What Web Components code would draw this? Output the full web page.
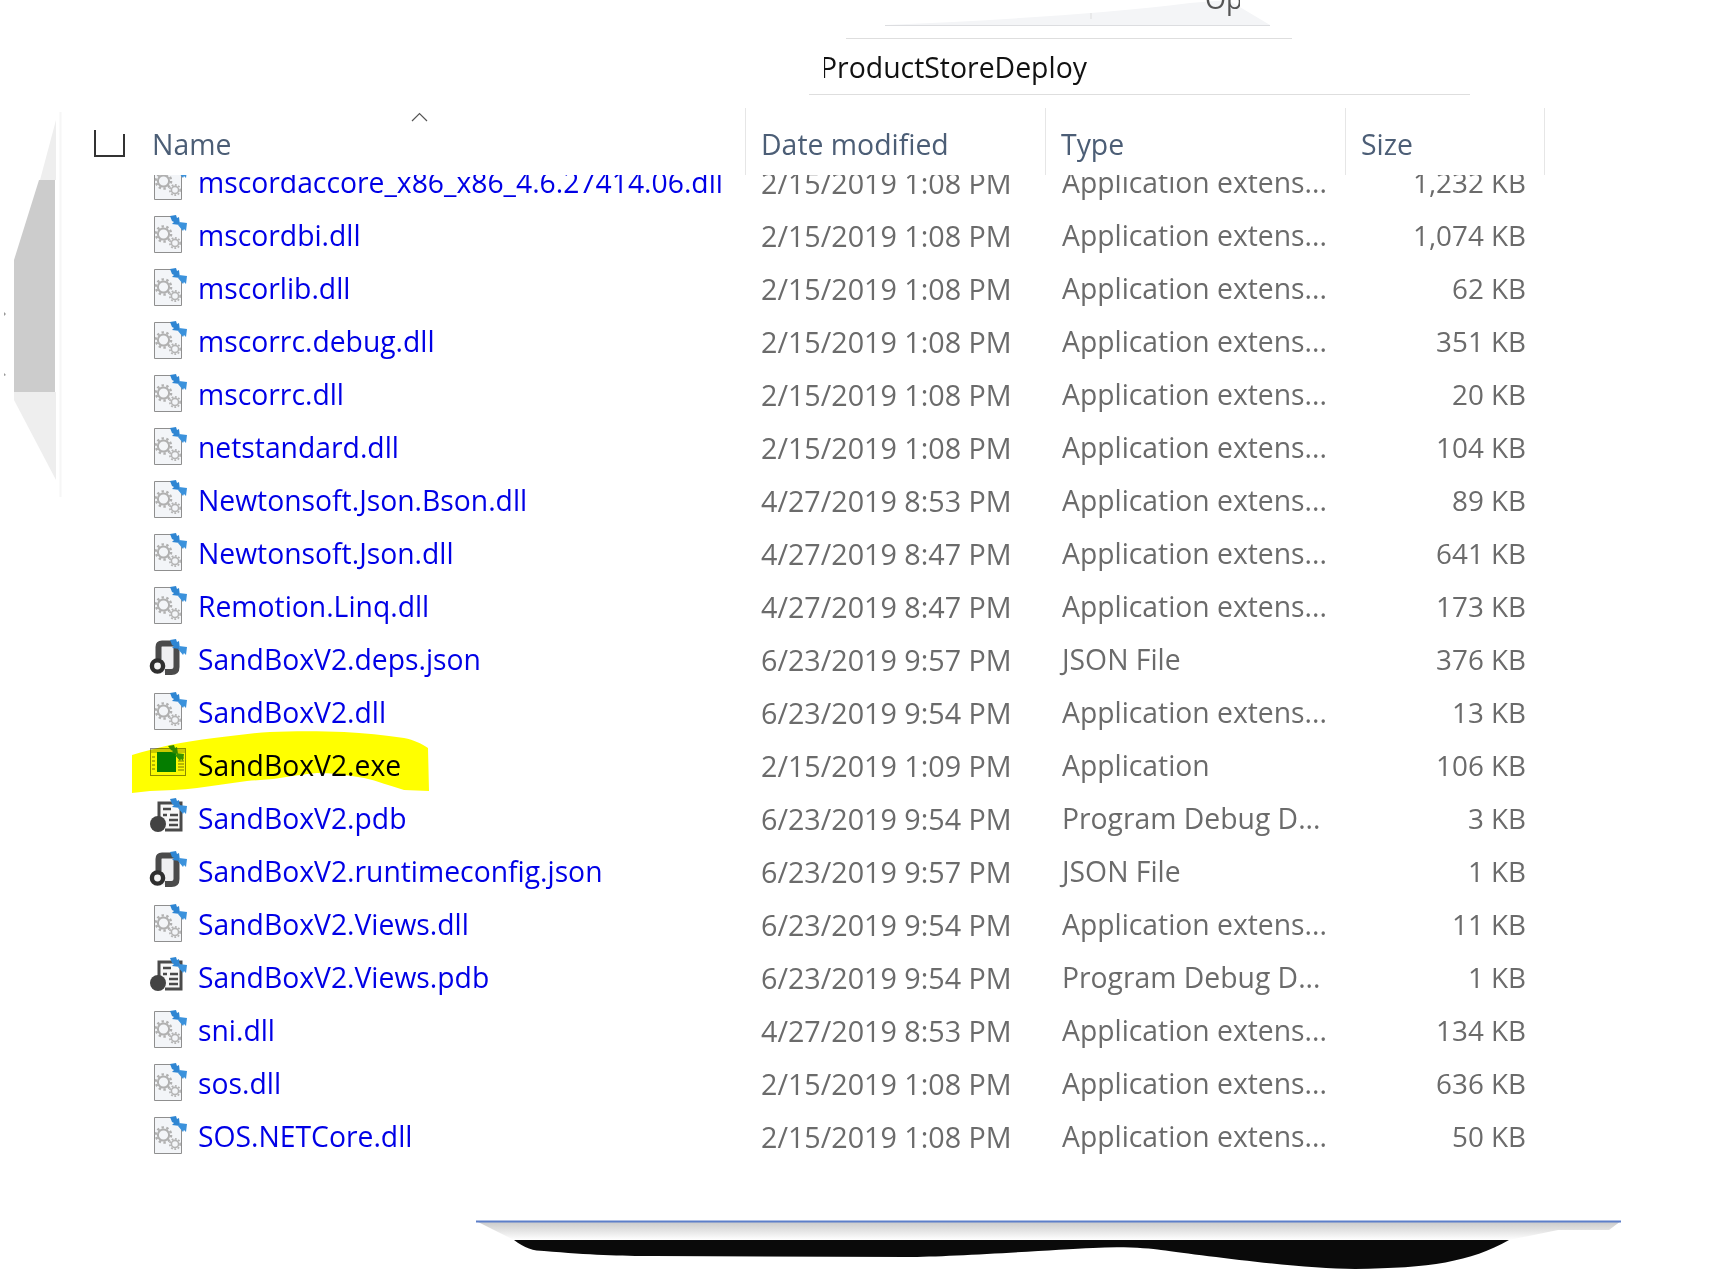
<!DOCTYPE html>
<html>
<head>
<meta charset="utf-8">
<style>
  html, body { margin: 0; background: #fff; }
  body { font-family: "Open Sans", "Noto Sans", sans-serif; width: 1725px; height: 1270px; overflow: hidden; position: relative; }
</style>
</head>
<body>
<torn-edges></torn-edges>
<path-bar>ProductStoreDeploy</path-bar>
<list-header></list-header>
<file-list>
  <file-row icon="dll" date="2/15/2019 1:08 PM" type="Application extens..." size="1,232 KB">mscordaccore_x86_x86_4.6.27414.06.dll</file-row>
  <file-row icon="dll" date="2/15/2019 1:08 PM" type="Application extens..." size="1,074 KB">mscordbi.dll</file-row>
  <file-row icon="dll" date="2/15/2019 1:08 PM" type="Application extens..." size="62 KB">mscorlib.dll</file-row>
  <file-row icon="dll" date="2/15/2019 1:08 PM" type="Application extens..." size="351 KB">mscorrc.debug.dll</file-row>
  <file-row icon="dll" date="2/15/2019 1:08 PM" type="Application extens..." size="20 KB">mscorrc.dll</file-row>
  <file-row icon="dll" date="2/15/2019 1:08 PM" type="Application extens..." size="104 KB">netstandard.dll</file-row>
  <file-row icon="dll" date="4/27/2019 8:53 PM" type="Application extens..." size="89 KB">Newtonsoft.Json.Bson.dll</file-row>
  <file-row icon="dll" date="4/27/2019 8:47 PM" type="Application extens..." size="641 KB">Newtonsoft.Json.dll</file-row>
  <file-row icon="dll" date="4/27/2019 8:47 PM" type="Application extens..." size="173 KB">Remotion.Linq.dll</file-row>
  <file-row icon="json" date="6/23/2019 9:57 PM" type="JSON File" size="376 KB">SandBoxV2.deps.json</file-row>
  <file-row icon="dll" date="6/23/2019 9:54 PM" type="Application extens..." size="13 KB">SandBoxV2.dll</file-row>
  <file-row icon="exe" marked date="2/15/2019 1:09 PM" type="Application" size="106 KB">SandBoxV2.exe</file-row>
  <file-row icon="pdb" date="6/23/2019 9:54 PM" type="Program Debug D..." size="3 KB">SandBoxV2.pdb</file-row>
  <file-row icon="json" date="6/23/2019 9:57 PM" type="JSON File" size="1 KB">SandBoxV2.runtimeconfig.json</file-row>
  <file-row icon="dll" date="6/23/2019 9:54 PM" type="Application extens..." size="11 KB">SandBoxV2.Views.dll</file-row>
  <file-row icon="pdb" date="6/23/2019 9:54 PM" type="Program Debug D..." size="1 KB">SandBoxV2.Views.pdb</file-row>
  <file-row icon="dll" date="4/27/2019 8:53 PM" type="Application extens..." size="134 KB">sni.dll</file-row>
  <file-row icon="dll" date="2/15/2019 1:08 PM" type="Application extens..." size="636 KB">sos.dll</file-row>
  <file-row icon="dll" date="2/15/2019 1:08 PM" type="Application extens..." size="50 KB">SOS.NETCore.dll</file-row>
</file-list>

<script>
const COLUMNS = "746px 300px 300px 199px";

// shared blue arrows in the corner of every file icon
const ARROWS = `
  <path d="M22 1l6-1 1 3 2-1 1 8-8-1 2-2-2-1z" fill="#2f86d3"/>
  <path d="M30 8l8 1-1 8-2-2-1 2-5-6 2-1z" fill="#3b92dc" transform="translate(1 -1)"/>`;

const ICONS = {
  dll: `
    <path d="M6.500 1.500H24L33.500 11V37.500H6.500z" fill="#f3f5f8" stroke="#8f8f8f"/>
    <circle cx="15.500" cy="19" r="5.600" fill="none" stroke="#b0b0b0" stroke-width="2"/>
    <circle cx="15.500" cy="19" r="7.600" fill="none" stroke="#b0b0b0" stroke-width="2.400" stroke-dasharray="2.400 2.400"/>
    <circle cx="27" cy="28" r="3.600" fill="none" stroke="#b4b4b4" stroke-width="1.600"/>
    <circle cx="27" cy="28" r="5.200" fill="none" stroke="#b4b4b4" stroke-width="1.800" stroke-dasharray="1.800 1.600"/>
    ${ARROWS}`,
  json: `
    <path d="M11 22V8q0-3.500 3-3.500H28V28q0 6-6 6h-8" fill="#efeff1" stroke="none"/>
    <path d="M10.500 20V8q0-3.500 3.500-3.500H27M28.500 9V28q0 5-5 5H17" fill="none" stroke="#4b4b4b" stroke-width="6"/>
    <circle cx="9.500" cy="27" r="5.600" fill="#f4f4f4" stroke="#2f2f2f" stroke-width="4.400"/>
    ${ARROWS}`,
  exe: `
    <rect x="2.500" y="3.500" width="35" height="27" fill="#fafafa" stroke="#8b8b8b"/>
    <rect x="3" y="4" width="34" height="4" fill="#c9c9c9"/>
    <rect x="9" y="7" width="19" height="20" fill="#057d05"/>
    <path d="M4 12h3M4 16h3M4 20h3M4 24h3M30 13h6M30 16h6M30 19h6M30 22h6M30 25h6" stroke="#777" stroke-width="1"/>
    <path d="M20 1l6-1 1 3 2-1 1 7-7-1 2-2-2-1z" fill="#2f86d3"/>
    <path d="M28 8l8 1-1 7-2-2-1 2-5-6 2-1z" fill="#3b92dc"/>`,
  pdb: `
    <path d="M11 22V5H33V32H17" fill="#f8f8f8" stroke="#4a4a4a" stroke-width="3"/>
    <path d="M15 11h8M15 17h4M22 17h8M21 22h9M21 27h9" stroke="#4a4a4a" stroke-width="2.600"/>
    <circle cx="10" cy="26" r="8" fill="#434343"/>
    ${ARROWS}`
};

class TornEdges extends HTMLElement {
  constructor() {
    super();
    this.attachShadow({ mode: "open" });
    this.shadowRoot.innerHTML = `
      <style>
        :host { position: absolute; left: 0; top: 0; width: 1725px; height: 1270px; pointer-events: none; }
        svg { display: block; }
        text { font: 27px "Open Sans", sans-serif; fill: #555; }
      </style>
      <svg width="1725" height="1270">
        <defs>
          <linearGradient id="shade" x1="0" y1="0" x2="0" y2="1">
            <stop offset="0" stop-color="#c8c8c8"/>
            <stop offset="1" stop-color="#fff"/>
          </linearGradient>
          <clipPath id="topclip"><rect x="1200" y="0" width="40" height="16"/></clipPath>
        </defs>
        <!-- scraps top centre -->
        <path d="M885 25C1000 20 1100 14 1190 3L1228 0L1270 25z" fill="#f4f5f7"/>
        <path d="M885 25.500H1270" stroke="#dcdde0"/>
        <path d="M846 38.500H1292" stroke="#dedede"/>
        <path d="M1091 13v6" stroke="#ddd"/>
        <g clip-path="url(#topclip)"><text x="1205" y="9">Op</text></g>
        <!-- scraps on the left -->
        <path d="M60.500 112V497" stroke="#f6f6f6" stroke-width="2"/>
        <path d="M56 120L40 180H56z" fill="#eeeeee"/>
        <path d="M14 392H56V480L14 400z" fill="#eeeeee"/>
        <path d="M39 180H55V392H14V260z" fill="#cccccc"/>
        <path d="M4 312l2 2-2 2zM4 373l2 2-2 1z" fill="#999"/>
        <!-- scraps at the bottom -->
        <path d="M476 1221H1621L1609 1230H1558L1509 1240H514z" fill="url(#shade)"/>
        <path d="M476 1221.500H1621" stroke="#5d7fc9" stroke-width="2"/>
        <path d="M514 1240C524 1248 534 1251 544 1251C590 1255 620 1256 654 1256L907 1257C950 1257 1050 1250 1093 1248C1120 1246 1150 1248 1161 1250C1200 1255 1300 1269 1355 1269C1430 1268 1470 1262 1509 1240z" fill="#0a0a0a"/>
      </svg>`;
  }
}

class PathBar extends HTMLElement {
  constructor() {
    super();
    this.attachShadow({ mode: "open" });
    this.shadowRoot.innerHTML = `
      <style>
        :host {
          display: flex; align-items: flex-end; box-sizing: border-box;
          width: 661px; height: 95px; margin-left: 809px; padding: 0 0 7px 15px;
          border-bottom: 1px solid #dedede; color: #111; font-size: 28.400px; line-height: 40px;
        }
        .clip { overflow: hidden; }
        .clip span { display: block; margin-left: -4px; }
      </style>
      <div class="clip"><span><slot></slot></span></div>`;
  }
}

class ListHeader extends HTMLElement {
  constructor() {
    super();
    this.attachShadow({ mode: "open" });
    this.shadowRoot.innerHTML = `
      <style>
        :host {
          display: grid; grid-template-columns: ${COLUMNS}; position: relative;
          height: 80px; box-sizing: border-box; padding-top: 13px; width: 1545px;
          color: #4c5e76; font-size: 28.400px;
        }
        .cell { border-right: 1px solid #e6e6e6; padding: 16px 0 0 15px; line-height: 40px; }
        .name { padding-left: 152px; position: relative; }
        .check { position: absolute; left: 94px; top: 22px; width: 31px; height: 27px; box-sizing: border-box; border: 2px solid #333; border-width: 0 0 2px 2px; }
        .check::after { content: ""; position: absolute; right: 0; bottom: 0; width: 2px; height: 21px; background: #333; }
        .sort { position: absolute; left: 411px; top: 4px; }
      </style>
      <div class="cell name">
        <span class="check"></span>
        <svg class="sort" width="17" height="10" viewBox="0 0 17 10"><path d="M1 9L8.500 1.500L16 9" fill="none" stroke="#555" stroke-width="1.200"/></svg>
        Name
      </div>
      <div class="cell">Date modified</div>
      <div class="cell">Type</div>
      <div class="cell">Size</div>`;
  }
}

class FileList extends HTMLElement {
  constructor() {
    super();
    this.attachShadow({ mode: "open" });
    this.shadowRoot.innerHTML = `
      <style>
        :host { display: block; overflow: hidden; width: 1545px; height: 1000px; }
        .scroller { margin-top: -19.500px; display: flex; flex-direction: column; }
      </style>
      <div class="scroller"><slot></slot></div>`;
  }
}

class FileRow extends HTMLElement {
  constructor() {
    super();
    this.attachShadow({ mode: "open" });
    const a = n => this.getAttribute(n) || "";
    const marked = this.hasAttribute("marked");
    this.shadowRoot.innerHTML = `
      <style>
        :host {
          display: grid; grid-template-columns: ${COLUMNS}; height: 53px; align-items: center;
          font-size: 28.300px; color: #6b6b6b; position: relative; white-space: nowrap;
        }
        .name { display: flex; align-items: center; padding-left: 148px; color: ${marked ? "#000" : "#0000e6"}; }
        .name svg { flex: none; margin-right: 10px; position: relative; top: 0; }
        .date { padding-left: 15px; font-size: 28.700px; }
        .type { padding-left: 16px; }
        .size { text-align: right; padding-right: 19px; font-size: 27.800px; }
        .mark { position: absolute; left: 132px; top: -10px; mix-blend-mode: multiply; }
      </style>
      <div class="name"><svg width="40" height="40" viewBox="0 0 40 40">${ICONS[a("icon")]}</svg><slot></slot></div>
      <div class="date">${a("date")}</div>
      <div class="type">${a("type")}</div>
      <div class="size">${a("size")}</div>
      ${marked ? `<svg class="mark" width="298" height="66" viewBox="0 0 298 66"><path d="M0 26C12 22 26 19 38 16C52 13 66 11 82 9C100 7 120 4 138 3C160 2 190 2 212 3C232 4 252 6 272 9C282 11 290 15 296 19L297 62L272 61C258 57 246 52 232 49C216 46 200 44 185 44C172 45 160 47 148 49C136 51 126 51 115 52C98 54 82 57 65 59C50 61 34 61 18 62L0 64z" fill="#ffff00"/></svg>` : ""}`;
  }
}

customElements.define("torn-edges", TornEdges);
customElements.define("path-bar", PathBar);
customElements.define("list-header", ListHeader);
customElements.define("file-list", FileList);
customElements.define("file-row", FileRow);
</script>
</body>
</html>
